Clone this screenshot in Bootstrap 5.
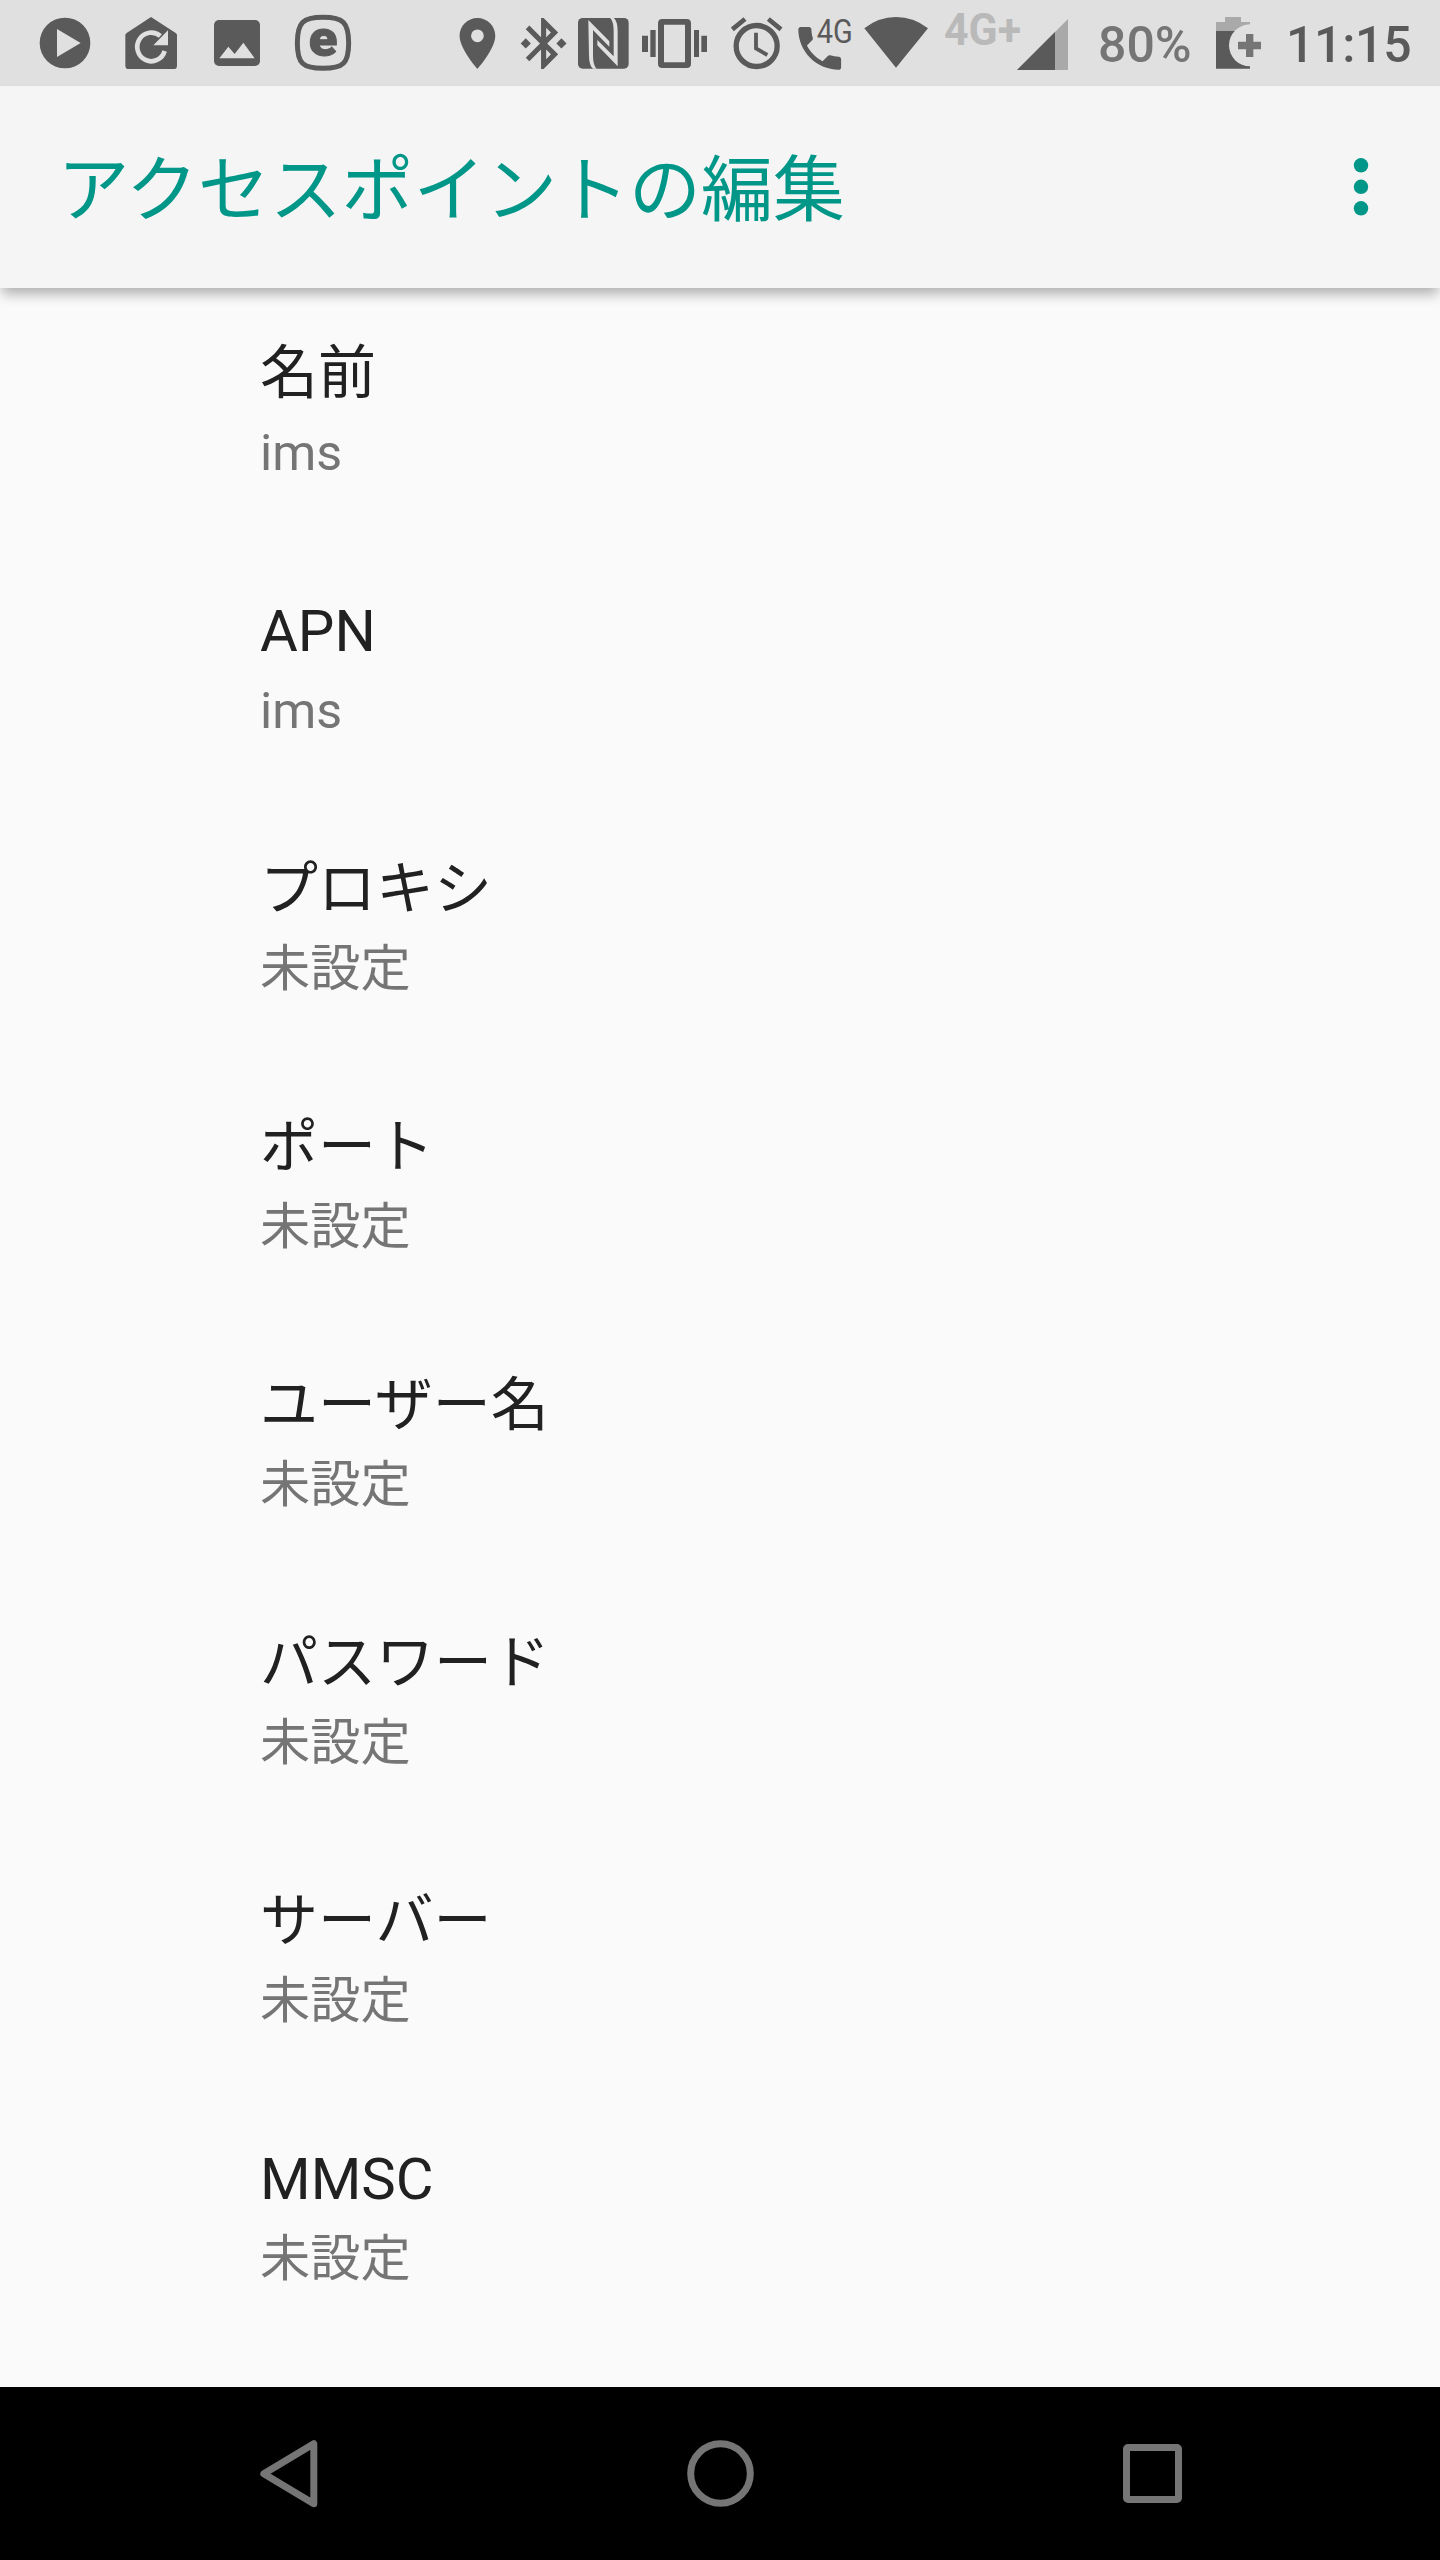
<!DOCTYPE html>
<html lang="ja">
<head>
<meta charset="utf-8">
<meta name="viewport" content="width=device-width, initial-scale=1">
<title>アクセスポイントの編集</title>
<link href="https://cdn.jsdelivr.net/npm/bootstrap@5.3.0/dist/css/bootstrap.min.css" rel="stylesheet">
<style>
body{font-family:Roboto,"Noto Sans CJK JP",sans-serif;background:#fafafa;color:#212121;overflow:hidden}
.screen{width:1440px;height:2560px}
.status{height:86px;background:#e0e0e0;color:#5a5a5a}
.status svg{height:86px;flex:none;fill:#5a5a5a}
.status-text{font-size:50px;font-weight:500;line-height:90px;height:86px;white-space:nowrap}
.level{width:125px;padding-left:18px;color:#757575}
.clock{padding-left:16px;letter-spacing:-.3px}
.appbar{height:202px;background:#f5f5f5;color:#009688;padding:3px 0 0 57.6px;box-shadow:0 8px 12px -2px rgba(0,0,0,.3);z-index:1}
.appbar h1{font-size:71.9px;font-weight:400;line-height:90px;padding-top:5px}
.pref{height:258px;padding:51px 0 0 260px}
.pref-name{font-size:58px;line-height:68px;margin-bottom:16px}
.pref-value{font-size:50.2px;line-height:60px;color:#757575}
.navkeys{height:173px;background:#000}
.navkeys svg{fill:none;stroke:#757575;stroke-width:7}
</style>
</head>
<body>
<div class="screen d-flex flex-column">
  <div class="status d-flex flex-shrink-0">
    <svg width="95" viewBox="0 0 285 258"><circle cx="195" cy="129" r="76"/><path fill="#e0e0e0" d="M171 87v84l71-42z"/></svg>
    <svg width="90" viewBox="285 0 270 258"><path d="M453 51l74 48q4 3 4 7v91q0 10-10 10H386q-10 0-10-10v-91q0-4 4-7z"/><path d="M494 153A42 43 0 1 1 481 108" fill="none" stroke="#e0e0e0" stroke-width="14"/><path fill="#e0e0e0" d="M504 91v45h-44z"/></svg>
    <svg width="90" viewBox="555 0 270 258"><rect x="642" y="60" width="138" height="138" rx="15"/><path fill="#e0e0e0" d="M658 175l27-35 19 22 26-34 34 47z"/></svg>
    <svg width="155" viewBox="825 0 465 258"><path d="M969 52C1030 52 1046 68 1046 129S1030 205 969 205 892 190 892 129 908 52 969 52z" fill="none" stroke="#5a5a5a" stroke-width="15"/><text x="926" y="168" font-size="151" font-weight="900" textLength="86" lengthAdjust="spacingAndGlyphs" stroke="#5a5a5a" stroke-width="3">e</text></svg>
    <svg width="80" viewBox="0 0 240 258"><path transform="translate(50.5 38.5) scale(7.65)" d="M12 2C8.13 2 5 5.13 5 9c0 5.25 7 13 7 13s7-7.75 7-13c0-3.87-3.13-7-7-7zm0 9.5a2.5 2.5 0 1 1 0-5 2.5 2.5 0 0 1 0 5z"/></svg>
    <svg width="62" viewBox="240 0 186 258"><path transform="translate(249 38.5) scale(7.65)" d="M7 12l-2-2-2 2 2 2 2-2zm10.71-4.29L12 2h-1v7.59L6.41 5 5 6.41 10.59 12 5 17.59 6.41 19 11 14.41V22h1l5.71-5.71-4.3-4.29 4.3-4.29zM13 5.83l1.88 1.88L13 9.59V5.83zm1.88 10.46L13 18.17v-3.76l1.88 1.88zM19 10l-2 2 2 2 2-2-2-2z"/></svg>
    <svg width="64" viewBox="-6 -42 192 258"><rect x="12" y="12" width="152" height="152" rx="14"/><path fill="#e0e0e0" d="M43 18L106 82V98L57 48V125Q57 153 68 164H57Q45 153 45 125zM131 157L70 94V78L119 127V50Q119 22 108 11H119Q131 22 131 50z"/></svg>
    <svg width="84" viewBox="618 0 252 258"><path d="M636 107h18v49h-18zM661 90h16v81h-16zM792 90h15v81h-15zM814 107h17v49h-17z"/><path fill-rule="evenodd" d="M697 57h73q13 0 13 13v121q0 13-13 13h-73q-13 0-13-13V70q0-13 13-13zm5 17v113h63V74z"/></svg>
    <svg width="70" viewBox="60 0 210 258"><g fill="none" stroke="#5a5a5a"><circle cx="170" cy="138" r="61.5" stroke-width="16"/><path d="M168 98v47l34 20" stroke-width="11.5"/><path d="M97 88l38-31M205 57l38 31" stroke-width="14"/></g></svg>
    <svg width="68" viewBox="270 0 204 258"><path transform="translate(273.6 59.6) scale(7.13)" d="M6.62 10.79c1.44 2.83 3.76 5.14 6.59 6.59l2.2-2.2c.27-.27.67-.36 1.02-.24 1.12.37 2.33.57 3.57.57.55 0 1 .45 1 1V20c0 .55-.45 1-1 1-9.39 0-17-7.61-17-17 0-.55.45-1 1-1h3.5c.55 0 1 .45 1 1 0 1.25.2 2.45.57 3.57.11.35.03.74-.25 1.02l-2.2 2.2z"/><text x="350" y="130" font-size="101" textLength="108" lengthAdjust="spacingAndGlyphs">4G</text></svg>
    <svg width="77" viewBox="474 0 231 258"><path d="M493 85Q535 51 588 51T684 85L588 203z"/></svg>
    <svg width="145" viewBox="45 0 435 258"><text x="72" y="134" font-size="132" font-weight="700" fill="#b9b9b9" textLength="231" lengthAdjust="spacingAndGlyphs">4G+</text><path fill="#a9a9a9" d="M291 210H444V57z"/><path d="M291 210H405V96z"/></svg>
    <span class="status-text level">80%</span>
    <svg width="65" viewBox="75 0 195 258"><path fill="#a9a9a9" d="M108 93V66h27V51h48v15h27v27z"/><path d="M108 93h102v113H108z"/><circle cx="210" cy="136" r="63" fill="#e0e0e0"/><path fill="#757575" d="M198 102h22v23h23v23h-23v23h-22v-23h-24v-23h24z"/></svg>
    <span class="status-text clock">11:15</span>
  </div>
  <header class="appbar d-flex align-items-center justify-content-between flex-shrink-0 position-relative">
    <h1 class="m-0">アクセスポイントの編集</h1>
    <svg width="158" height="199" viewBox="1282 89 158 199" fill="#009688"><circle cx="1361" cy="165.3" r="7.2"/><circle cx="1361" cy="186.8" r="7.2"/><circle cx="1361" cy="208.3" r="7.2"/></svg>
  </header>
  <main class="flex-grow-1 overflow-hidden">
    <div class="pref"><div class="pref-name">名前</div><div class="pref-value">ims</div></div>
    <div class="pref"><div class="pref-name">APN</div><div class="pref-value">ims</div></div>
    <div class="pref"><div class="pref-name">プロキシ</div><div class="pref-value">未設定</div></div>
    <div class="pref"><div class="pref-name">ポート</div><div class="pref-value">未設定</div></div>
    <div class="pref"><div class="pref-name">ユーザー名</div><div class="pref-value">未設定</div></div>
    <div class="pref"><div class="pref-name">パスワード</div><div class="pref-value">未設定</div></div>
    <div class="pref"><div class="pref-name">サーバー</div><div class="pref-value">未設定</div></div>
    <div class="pref"><div class="pref-name">MMSC</div><div class="pref-value">未設定</div></div>
  </main>
  <nav class="navkeys d-flex flex-shrink-0 justify-content-center">
    <svg width="432" height="173" viewBox="72 2387 432 173"><path stroke-linejoin="round" d="M313.8 2443.8v60L263.8 2473.8z"/></svg>
    <svg width="432" height="173" viewBox="504 2387 432 173"><circle cx="720.5" cy="2473.5" r="29.8"/></svg>
    <svg width="432" height="173" viewBox="936 2387 432 173"><rect x="1126.5" y="2447.5" width="52" height="52" rx="1.5" stroke-linejoin="round"/></svg>
  </nav>
</div>
<script src="https://cdn.jsdelivr.net/npm/bootstrap@5.3.0/dist/js/bootstrap.bundle.min.js"></script>
</body>
</html>
